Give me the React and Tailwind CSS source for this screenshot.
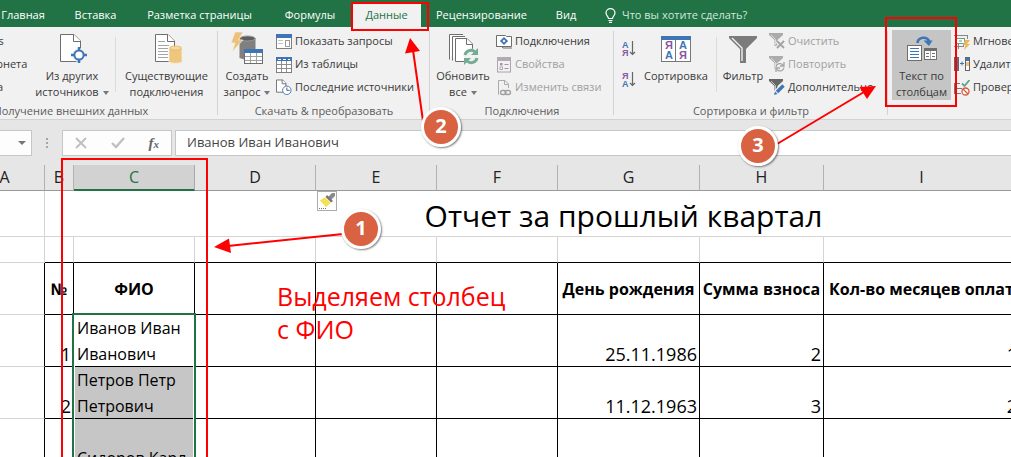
import React from "react";

const UI = "font-['Open_Sans','Noto_Sans',sans-serif]";

/* ---------- icons ---------- */

function Page({ x = 0, y = 0, w = 20, h = 27, f = 7 }) {
  return (
    <g transform={`translate(${x} ${y})`}>
      <path d={`M.5 .5H${w - f}L${w - 0.5} ${f}V${h - 0.5}H.5Z`} fill="#fff" stroke="#6e6e6e" />
      <path d={`M${w - f - 0.5} .5V${f + 0.5}H${w}`} fill="#fff" stroke="#6e6e6e" />
    </g>
  );
}

function OtherSourcesIcon() {
  return (
    <svg width="30" height="32" viewBox="0 0 30 32">
      <Page x={3} y={1} w={21} h={28} />
      <circle cx="22" cy="22" r="7" fill="#f1f1f1" />
      <circle cx="22" cy="22" r="4.600" fill="#fff" stroke="#3e76b5" strokeWidth="2" />
      <path d="M22 14v4M22 26v4M14 22h4M26 22h4" stroke="#3e76b5" strokeWidth="2.400" />
    </svg>
  );
}

function ConnectionsBigIcon() {
  return (
    <svg width="32" height="32" viewBox="0 0 32 32">
      <Page x={4} y={1} w={20} h={28} />
      <path d="M7 8.500h7M7 12.500h11M7 15.500h10M7 18.500h10M7 21.500h10M7 24.500h10" stroke="#a5a5a5" />
      <path d="M18 15h13v14.500q-6.500 2-13 0z" fill="#eec77d" stroke="#f1f1f1" strokeWidth=".8" />
      <ellipse cx="24.500" cy="15" rx="6" ry="2" fill="#f4d9a3" stroke="#e3b563" strokeWidth=".8" />
    </svg>
  );
}

function CreateQueryIcon() {
  return (
    <svg width="34" height="34" viewBox="0 0 34 34">
      <path d="M9.500 6v20q6 3 16 1V6z" fill="#808080" />
      <ellipse cx="17.500" cy="6.500" rx="7.500" ry="2.500" fill="#5e5e5e" stroke="#9a9a9a" />
      <path d="M5 0h8L8.500 8h4.500L2 20l3-9H1z" fill="#eec17b" stroke="#f1f1f1" strokeWidth=".6" />
      <rect x="14.500" y="17.500" width="18" height="14" fill="#fff" stroke="#6e6e6e" />
      <rect x="14" y="17" width="19" height="4" fill="#3e76b5" />
      <path d="M20.500 21v10M26.500 21v10M15 24.500h17M15 28.500h17" stroke="#a0a0a0" />
    </svg>
  );
}

function ShowQueriesIcon() {
  return (
    <svg width="16" height="16" viewBox="0 0 16 16">
      <rect x=".5" y="1.500" width="15" height="13" fill="#fff" stroke="#808080" />
      <rect width="16" height="4" y="0" fill="#3e76b5" />
      <rect x="9.500" y="6.500" width="4" height="6" fill="#fff" stroke="#9a9a9a" />
      <path d="M2 6.500h5M2 9.500h5" stroke="#c4c4c4" />
    </svg>
  );
}

function FromTableIcon() {
  return (
    <svg width="16" height="16" viewBox="0 0 16 16">
      <rect x=".5" y=".5" width="15" height="15" fill="#fff" stroke="#808080" />
      <rect width="16" height="4" fill="#3e76b5" />
      <path d="M2 2.500h3M7 2.500h3M12 2.500h2" stroke="#fff" />
      <path d="M5.500 4v11M10.500 4v11M1 7.500h14M1 11.500h14" stroke="#8e8e8e" />
    </svg>
  );
}

function RecentIcon() {
  return (
    <svg width="17" height="17" viewBox="0 0 17 17">
      <Page x={0} y={0} w={11} h={14} f={4} />
      <circle cx="11.500" cy="11.500" r="4.500" fill="#fff" stroke="#3e76b5" />
      <path d="M11.500 8.500v3h3" fill="none" stroke="#555" />
    </svg>
  );
}

function RefreshIcon() {
  return (
    <svg width="32" height="32" viewBox="0 0 32 32">
      <g fill="#fff" stroke="#6e6e6e">
        <path d="M2.500 26.500V1.500H16" />
        <path d="M5.500 27.500V3.500H18" />
        <path d="M8.500 5.500H20L25.500 11V28.500H8.500Z" />
        <path d="M19.500 5.500V11.500H25.500" />
      </g>
      <circle cx="24" cy="23" r="7.500" fill="#f1f1f1" />
      <g fill="none" stroke="#74ab95" strokeWidth="3">
        <path d="M18 22a6 6 0 0 1 10-3" />
        <path d="M30 25a6 6 0 0 1-10 3" />
      </g>
      <path d="M31 15v7h-7zM17 32v-7h7z" fill="#74ab95" />
    </svg>
  );
}

function ConnIcon() {
  return (
    <svg width="16" height="14" viewBox="0 0 16 14">
      <path d="M.5 .5h9l1 1h5v10h-15z" fill="#fff" stroke="#6e6e6e" />
      <path d="M0 11.500h6l1 1.500h9" fill="none" stroke="#6e6e6e" />
      <rect x="6" y="4" width="4" height="4" transform="rotate(45 8 6)" fill="#fff" stroke="#3e76b5" strokeWidth="1.800" />
    </svg>
  );
}

function PropsIcon() {
  return (
    <svg width="16" height="16" viewBox="0 0 16 16">
      <rect x="1.500" y="1" width="13" height="14" fill="#f4f1f4" stroke="#a8a4a8" />
      <rect x="1" y="0" width="14" height="4" fill="#b0acb0" />
      <rect x="4" y="6" width="2.500" height="2.500" fill="#9c989c" />
      <rect x="4" y="10" width="2.500" height="2.500" fill="#fff" stroke="#9c989c" strokeWidth=".8" />
      <path d="M8.500 7.500h4M8.500 11.500h4" stroke="#9c989c" />
    </svg>
  );
}

function EditLinksIcon() {
  return (
    <svg width="16" height="16" viewBox="0 0 16 16">
      <path d="M3 14.500H2.500V.5H9L12.500 4V8M8.500 .5V4.500H12.500" fill="none" stroke="#aaa" />
      <g fill="none" stroke="#a0a0a0" strokeWidth="1.300">
        <rect x="4.500" y="10.500" width="5.500" height="4" rx="2" />
        <rect x="9" y="10.500" width="5.500" height="4" rx="2" />
      </g>
    </svg>
  );
}

function SortIcon({ desc }) {
  return (
    <svg width="15" height="17" viewBox="0 0 15 17" className="font-['Liberation_Sans',sans-serif] text-[9px] font-bold">
      <text x="0" y="8" fill={desc ? "#8a55a2" : "#3e76b5"}>{desc ? "Я" : "А"}</text>
      <text x="0" y="16" fill={desc ? "#3e76b5" : "#8a55a2"}>{desc ? "А" : "Я"}</text>
      <path d="M10.500 1v13.500M8 12l2.500 2.500 2.500-2.500" fill="none" stroke="#666" strokeWidth="1.200" />
    </svg>
  );
}

function SortBigIcon() {
  return (
    <svg width="30" height="26" viewBox="0 0 30 26" className="font-['Liberation_Sans',sans-serif] text-[11px] font-bold">
      <rect x=".5" y=".5" width="29" height="25" fill="#fff" stroke="#777" />
      <rect width="30" height="4" fill="#3e76b5" />
      <path d="M14.500 4v21" stroke="#777" />
      <text x="4" y="13" fill="#8a55a2">Я</text>
      <text x="4" y="23" fill="#3e76b5">А</text>
      <text x="18" y="13" fill="#3e76b5">А</text>
      <text x="18" y="23" fill="#8a55a2">Я</text>
    </svg>
  );
}

function FilterIcon() {
  return (
    <svg width="28" height="28" viewBox="0 0 28 28">
      <path d="M0 1h28v2L17 14v14h-6V14L0 3z" fill="#7b7b7b" />
      <path d="M3 3l10 10v13" fill="none" stroke="#f1f1f1" strokeWidth="1.400" />
    </svg>
  );
}

function MiniFilter({ kind }) {
  const c = kind === "edit" ? "#666" : "#ababab";
  return (
    <svg width="16" height="17" viewBox="0 0 16 17">
      <path d="M0 0h14v2L8.500 7v6H5.500V7L0 2z" fill={c} />
      <path d="M2 2l4.500 4.500V12" fill="none" stroke="#eee" strokeWidth=".7" />
      {kind === "clear" && (
        <g>
          <path d="M8 8l7 7M15 8l-7 7" stroke="#f1f1f1" strokeWidth="4" />
          <path d="M8 8l7 7M15 8l-7 7" stroke="#a3a3a3" strokeWidth="1.800" />
        </g>
      )}
      {kind === "redo" && (
        <g>
          <circle cx="11" cy="11" r="5" fill="#f1f1f1" />
          <path d="M7 11a4 4 0 0 1 7-2M15 11.500a4 4 0 0 1-7 2M15 6v4h-4M7 16v-4h4" fill="none" stroke="#a3a3a3" strokeWidth="1.300" />
        </g>
      )}
      {kind === "edit" && (
        <g>
          <path d="M6 15L15 6" stroke="#f1f1f1" strokeWidth="6" />
          <path d="M8 13l6.500-6.500" stroke="#3e76b5" strokeWidth="3.400" />
          <path d="M5 16l1-3.500L8.500 15z" fill="#3e76b5" />
        </g>
      )}
    </svg>
  );
}

function TextColumnsIcon() {
  return (
    <svg width="30" height="28" viewBox="0 0 30 28">
      <path d="M10.500 8C11 2 20 .5 22.500 7" fill="none" stroke="#3e76b5" strokeWidth="2.600" />
      <path d="M16.500 5.500h9L22 11z" fill="#3e76b5" />
      <rect x=".5" y="10.500" width="14" height="15" fill="#fff" stroke="#6e6e6e" />
      <path d="M3 13.500h9M3 16.500h9M3 19.500h9M3 22.500h9" stroke="#3e76b5" />
      <rect x="17.500" y="13.500" width="12" height="11" fill="#fff" stroke="#6e6e6e" />
      <rect x="17" y="13" width="13" height="3" fill="#6e6e6e" />
      <path d="M19 18.500h3M25 18.500h3M19 21.500h3M25 21.500h3" stroke="#6e6e6e" />
      <path d="M23.500 16v8" stroke="#aaa" />
    </svg>
  );
}

function FlashFillIcon() {
  return (
    <svg width="16" height="16" viewBox="0 0 16 16">
      <path d="M0 1.500h14M0 12.500h9M4.500 10v5M9.500 10v3M13.500 1v4" stroke="#888" fill="none" />
      <rect x="2.500" y="4.500" width="8" height="5" fill="#fff" stroke="#5fa389" />
      <path d="M5 7h3" stroke="#5fa389" />
      <path d="M11 6h5l-3 4h3l-6 6 1.500-5H9z" fill="#eeb65a" />
    </svg>
  );
}

function DedupeIcon() {
  return (
    <svg width="16" height="15" viewBox="0 0 16 15">
      <rect x=".5" y=".5" width="4" height="13" fill="#3e76b5" stroke="#666" />
      <rect x="11.500" y=".5" width="4" height="13" fill="#fff" stroke="#666" />
      <rect x="12" y="1" width="3" height="3" fill="#3e76b5" />
      <rect x="12" y="5" width="3" height="4" fill="#f0c277" />
      <path d="M6 6.500h4M8 4.500v4" stroke="#3e76b5" />
    </svg>
  );
}

function ValidateIcon() {
  return (
    <svg width="16" height="16" viewBox="0 0 16 16">
      <path d="M0 3.500h6M0 8.500h8M0 13.500h7M.5 3v11" stroke="#777" fill="none" />
      <path d="M8 3.500l2.500 2.500 5-6" fill="none" stroke="#5fa389" strokeWidth="1.800" />
      <circle cx="11.500" cy="11.500" r="3.500" fill="#fff" stroke="#d8583c" strokeWidth="1.300" />
      <path d="M9 9l5 5" stroke="#d8583c" strokeWidth="1.300" />
    </svg>
  );
}

function BulbIcon() {
  return (
    <svg width="11" height="15" viewBox="0 0 11 15">
      <path d="M3.500 10.500C3.500 8.500 1 7.500 1 5a4.500 4.300 0 0 1 9 0c0 2.500-2.500 3.500-2.500 5.500zM3.500 12.500h4M4 14.300h3" fill="none" stroke="#fff" strokeWidth="1.200" />
    </svg>
  );
}

function BrushIcon() {
  return (
    <svg width="16" height="16" viewBox="0 0 16 16">
      <path d="M9 4l4-4h3v3l-4 4z" fill="#8a8a8a" />
      <path d="M8 2l6 6-2 1.500L6.500 4z" fill="#777" />
      <path d="M6 4.500l5.500 5.500L7 14 1 7.500z" fill="#f3dc3c" />
      <path d="M3 9l5-3M5 11l5-3M7 12l3-2" stroke="#fff7a8" strokeDasharray="1 1" />
      <path d="M0 15.500h8" stroke="#777" strokeDasharray="1 1" />
    </svg>
  );
}

/* ---------- ribbon parts ---------- */

function Arrow() {
  return <span className="ml-1 inline-block border-x-[3px] border-t-[4px] border-x-transparent border-t-[#777] align-middle" />;
}

function BigButton({ icon, lines, width, active, drop }) {
  return (
    <button
      type="button"
      className={`flex h-[70px] shrink-0 flex-col items-center text-[11px] leading-4 whitespace-nowrap text-[#3a3a3a] ${width} ${active ? "bg-[#c5c5c5]" : ""}`}
    >
      <span className="flex h-[38px] shrink-0 items-center justify-center">{icon}</span>
      {lines.map((line, i) => (
        <span key={line}>
          {line}
          {drop && i === lines.length - 1 && <Arrow />}
        </span>
      ))}
    </button>
  );
}

function SmallList({ items }) {
  return (
    <ul className="flex flex-col">
      {items.map(([icon, label, off]) => (
        <li key={label}>
          <button
            type="button"
            disabled={off}
            className={`flex h-[23px] items-center gap-[3px] text-[11px] whitespace-nowrap ${off ? "text-[#a0a0a0]" : "text-[#3a3a3a]"}`}
          >
            <span className="flex w-4 shrink-0 justify-center">{icon}</span>
            {label}
          </button>
        </li>
      ))}
    </ul>
  );
}

function Group({ label, width, children }) {
  return (
    <section className={`relative flex shrink-0 flex-col pt-[3px] ${width}`}>
      <div className="flex h-[70px]">{children}</div>
      <h2 className="mt-[3px] text-center text-[11px] leading-4 whitespace-nowrap text-[#5c5c5c]">{label}</h2>
      <span className="absolute top-1 right-0 h-[84px] w-px bg-[#d2d2d2]" />
    </section>
  );
}

function Divider() {
  return <span className="mt-[7px] h-[55px] w-px shrink-0 bg-[#dcdcdc]" />;
}

const tabs = [
  ["Главная", "w-[74px]"],
  ["Вставка", "w-[71px]"],
  ["Разметка страницы", "w-[137px]"],
  ["Формулы", "w-[84px]"],
  ["Данные", "w-[69px]"],
  ["Рецензирование", "w-[121px]"],
  ["Вид", "w-[48px]"],
];

function TabBar() {
  return (
    <nav className="flex h-[27px] items-end bg-[#217346] pt-1 text-[11px] text-white">
      <div className="-ml-[14px] flex h-full">
        {tabs.map(([t, w]) => (
          <button
            key={t}
            type="button"
            className={`flex shrink-0 items-center justify-center whitespace-nowrap ${w} ${t === "Данные" ? "bg-[#f1f1f1] text-[#217346]" : ""}`}
          >
            {t}
          </button>
        ))}
      </div>
      <button type="button" className="ml-[15px] flex h-full items-center gap-[6px] whitespace-nowrap text-[#d3e6da]">
        <BulbIcon />
        Что вы хотите сделать?
      </button>
    </nav>
  );
}

function Ribbon() {
  return (
    <div className="flex h-[93px] overflow-hidden border-b border-[#d2d2d2] bg-[#f1f1f1]">
      <div className="-ml-[76px] flex">
        <Group label="Получение внешних данных" width="w-[294px]">
          <div className="w-[111px] pl-[10px]">
            <SmallList
              items={[
                [<FromTableIcon />, "Из Access"],
                [<ConnIcon />, "Из Интернета"],
                [<RecentIcon />, "Из текста"],
              ]}
            />
          </div>
          <BigButton width="w-[74px]" icon={<OtherSourcesIcon />} lines={["Из других", "источников"]} drop />
          <span className="w-[6px]" />
          <Divider />
          <BigButton width="w-[101px]" icon={<ConnectionsBigIcon />} lines={["Существующие", "подключения"]} />
        </Group>
        <Group label="Скачать & преобразовать" width="w-[212px]">
          <BigButton width="w-[58px]" icon={<CreateQueryIcon />} lines={["Создать", "запрос"]} drop />
          <SmallList
            items={[
              [<ShowQueriesIcon />, "Показать запросы"],
              [<FromTableIcon />, "Из таблицы"],
              [<RecentIcon />, "Последние источники"],
            ]}
          />
        </Group>
        <Group label="Подключения" width="w-[184px]">
          <BigButton width="w-[66px]" icon={<RefreshIcon />} lines={["Обновить", "все"]} drop />
          <SmallList
            items={[
              [<ConnIcon />, "Подключения"],
              [<PropsIcon />, "Свойства", true],
              [<EditLinksIcon />, "Изменить связи", true],
            ]}
          />
        </Group>
        <Group label="Сортировка и фильтр" width="w-[274px]">
          <div className="flex w-[26px] flex-col items-center gap-[14px] pt-[10px] pl-1">
            <button type="button" aria-label="А-Я"><SortIcon /></button>
            <button type="button" aria-label="Я-А"><SortIcon desc /></button>
          </div>
          <BigButton width="w-[72px]" icon={<SortBigIcon />} lines={["Сортировка"]} />
          <span className="w-1" />
          <Divider />
          <BigButton width="w-[52px]" icon={<FilterIcon />} lines={["Фильтр"]} />
          <SmallList
            items={[
              [<MiniFilter kind="clear" />, "Очистить", true],
              [<MiniFilter kind="redo" />, "Повторить", true],
              [<MiniFilter kind="edit" />, "Дополнительно"],
            ]}
          />
        </Group>
        <Group label="" width="w-[320px]">
          <span className="w-1" />
          <BigButton active width="w-[59px]" icon={<TextColumnsIcon />} lines={["Текст по", "столбцам"]} />
          <span className="w-[3px]" />
          <SmallList
            items={[
              [<FlashFillIcon />, "Мгновенное заполнение"],
              [<DedupeIcon />, "Удалить дубликаты"],
              [<ValidateIcon />, "Проверка данных"],
            ]}
          />
        </Group>
      </div>
    </div>
  );
}

function FormulaBar() {
  return (
    <div className="flex h-[45px] bg-[#e6e6e6] pt-[10px] pb-[9px]">
      <button type="button" aria-label="Имя ячейки" className="flex w-8 items-center justify-end border border-l-0 border-[#c6c6c6] bg-[#fdfdfd] pr-[5px]">
        <span className="border-x-4 border-t-4 border-x-transparent border-t-[#777]" />
      </button>
      <div className="flex w-[30px] flex-col items-center justify-center gap-[2px]">
        <i className="size-[2px] bg-[#a6a6a6]" />
        <i className="size-[2px] bg-[#a6a6a6]" />
        <i className="size-[2px] bg-[#a6a6a6]" />
      </div>
      <div className="flex w-[110px] items-center justify-around border border-[#c6c6c6] bg-[#fdfdfd]">
        <button type="button" aria-label="Отмена">
          <svg width="12" height="12" viewBox="0 0 12 12"><path d="M1 1l10 10M11 1L1 11" stroke="#c0c0c0" strokeWidth="2" /></svg>
        </button>
        <button type="button" aria-label="Ввод">
          <svg width="14" height="12" viewBox="0 0 14 12"><path d="M1 6l4 4 8-9" fill="none" stroke="#c0c0c0" strokeWidth="2.400" /></svg>
        </button>
        <button type="button" className="font-['Liberation_Serif',serif] text-[15px] leading-4 font-bold text-[#666] italic">
          f<span className="text-[11px]">x</span>
        </button>
      </div>
      <input
        aria-label="Строка формул"
        defaultValue="Иванов Иван Иванович"
        className="ml-[3px] min-w-0 flex-1 border border-r-0 border-[#c6c6c6] bg-white px-[11px] text-[13px] text-[#444] outline-none"
      />
    </div>
  );
}

/* ---------- sheet ---------- */

const cols = [
  ["A", "w-[80px]"],
  ["B", "w-[29px]"],
  ["C", "w-[121px]"],
  ["D", "w-[121px]"],
  ["E", "w-[121px]"],
  ["F", "w-[121px]"],
  ["G", "w-[142px]"],
  ["H", "w-[124px]"],
  ["I", "w-[196px]"],
  ["J", "w-[183px]"],
];

const rows = [
  { n: 1, name: ["Иванов Иван", "Иванович"], born: "25.11.1986", sum: 2, months: 1, h: "h-[52px]" },
  { n: 2, name: ["Петров Петр", "Петрович"], born: "11.12.1963", sum: 3, months: 2, h: "h-[52px]" },
  { n: 3, name: ["Сидоров Карл", "Карлович"], born: "", sum: "", months: "", h: "h-[78px]" },
];

const light = "border-r border-b border-[#d4d4d4]";
const dark = "border-r border-b border-black";
const num = `p-0 pr-[2px] text-right align-bottom text-[18px] leading-6 ${dark}`;

function Sheet() {
  return (
    <table className="-ml-[35px] w-[1238px] table-fixed border-separate border-spacing-0 bg-white text-[16px] leading-[26px] text-black">
      <colgroup>
        {cols.map(([c, w]) => (
          <col key={c} className={w} />
        ))}
      </colgroup>
      <thead>
        <tr className="h-[26px] bg-[#e6e6e6] leading-[23px] text-[#222]">
          {cols.map(([c]) =>
            c === "C" ? (
              <th key={c} className="border-r border-b-2 border-r-[#aaa] border-b-[#217346] bg-[#d2d2d2] p-0 font-normal text-[#217346]">
                {c}
              </th>
            ) : (
              <th key={c} className="border-r border-b border-r-[#b1b1b1] border-b-[#999] p-0 font-normal">
                {c}
              </th>
            )
          )}
        </tr>
      </thead>
      <tbody>
        <tr className="h-[46px]">
          <td className={`p-0 ${light}`} />
          <td colSpan={9} className={`p-0 pt-1 text-center text-[30px] leading-[41px] ${light}`}>
            Отчет за прошлый квартал
          </td>
        </tr>
        <tr className="h-[26px]">
          {cols.map(([c]) => (
            <td key={c} className={`p-0 ${c === "A" ? light : "border-r border-b border-r-[#d4d4d4] border-b-black"}`} />
          ))}
        </tr>
        <tr className="h-[52px]">
          <td className="border-r border-b border-r-black border-b-[#d4d4d4] p-0" />
          {["№", "ФИО", "", "", "", "День рождения", "Сумма взноса", "Кол-во месяцев оплат", ""].map((t, i) => (
            <th key={i} className={`p-0 whitespace-nowrap ${dark}`}>
              {t}
            </th>
          ))}
        </tr>
        {rows.map((r, i) => (
          <tr key={r.n} className={r.h}>
            <td className="border-r border-b border-r-black border-b-[#d4d4d4] p-0" />
            <td className={num}>{r.n}</td>
            <td className={`p-0 pl-[3px] align-bottom whitespace-nowrap ${dark} ${i ? "bg-[#c6c6c6]" : "relative"}`}>
              <div className="h-[51px]">
                {r.name[0]}
                <br />
                {r.name[1]}
              </div>
              {i === 0 && (
                <span className="pointer-events-none absolute -top-[2px] -left-[2px] h-[190px] w-[124px] border-2 border-[#217346] shadow-[inset_0_0_0_1px_white]" />
              )}
            </td>
            <td className={`p-0 ${dark}`} />
            <td className={`p-0 ${dark}`} />
            <td className={`p-0 ${dark}`} />
            <td className={num}>{r.born}</td>
            <td className={num}>{r.sum}</td>
            <td className={num}>{r.months}</td>
            <td className={`p-0 ${dark}`} />
          </tr>
        ))}
      </tbody>
    </table>
  );
}

/* ---------- tutorial marks ---------- */

function Badge({ n, pos }) {
  return (
    <span
      className={`absolute flex size-10 items-center justify-center rounded-full border-[3px] border-white bg-[#d96243] pb-[3px] text-[20px] leading-none font-bold text-white shadow-[1px_1px_2px_rgba(0,0,0,0.5)] ${pos}`}
    >
      {n}
    </span>
  );
}

function Marks() {
  return (
    <div className="pointer-events-none absolute inset-0">
      <span className="absolute top-[158px] left-[61px] h-[320px] w-[147px] border-2 border-[#f00]" />
      <span className="absolute top-[2px] left-[351px] h-[29px] w-[78px] border-2 border-[#f00]" />
      <span className="absolute top-[17px] left-[885px] h-[90px] w-[72px] border-2 border-[#f00]" />
      <svg className="absolute top-0 left-0" width="1011" height="457" viewBox="0 0 1011 457">
        <g stroke="#f00" strokeWidth="2">
          <path d="M343 234L228 246M423 121L413 50M777 144L864 92" />
        </g>
        <g fill="#f00">
          <path d="M214 247L229 238.500L231 253zM410 38L405 53.500L420 51zM876 86L859.500 87L867 99z" />
        </g>
      </svg>
      <Badge n="1" pos="top-[209px] left-[341px]" />
      <Badge n="2" pos="top-[107px] left-[421px]" />
      <Badge n="3" pos="top-[126px] left-[738px]" />
      <p className="absolute top-[280px] left-[277px] text-[25px] leading-[33px] whitespace-nowrap text-[#f00]">
        Выделяем столбец
        <br />с ФИО
      </p>
      <span className="absolute top-[191px] left-[317px] flex size-5 items-center justify-center border border-[#ababab] bg-white">
        <BrushIcon />
      </span>
    </div>
  );
}

export default function App() {
  return (
    <main className={`relative h-screen overflow-hidden bg-white ${UI}`}>
      <TabBar />
      <Ribbon />
      <FormulaBar />
      <Sheet />
      <Marks />
    </main>
  );
}
